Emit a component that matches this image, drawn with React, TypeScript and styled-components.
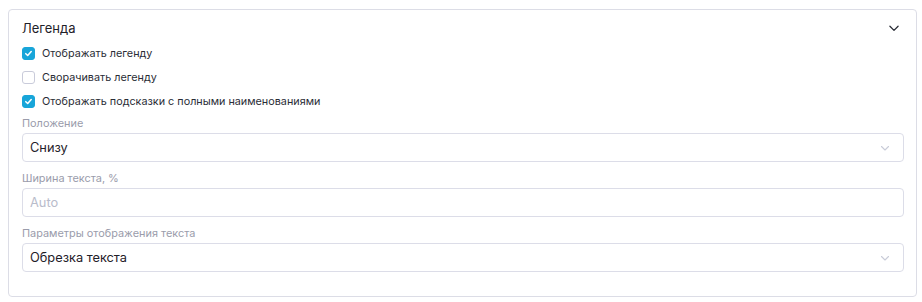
import * as React from "react";
import styled, { createGlobalStyle } from "styled-components";

const GlobalStyle = createGlobalStyle`
  html, body {
    margin: 0;
    padding: 0;
    background: #ffffff;
  }
  body {
    padding: 9px 5px 0 8px;
    font-family: Inter, "Noto Sans", Arial, sans-serif;
    color: #1f2129;
  }
`;

function Chevron({ color, size }: { color: string; size: number }) {
  return (
    <svg width={size} height={size} viewBox="0 0 12 12" fill="none">
      <path
        d="M2.5 4.5 L6 8 L9.5 4.5"
        stroke={color}
        strokeWidth="1.1"
        strokeLinecap="round"
        strokeLinejoin="round"
      />
    </svg>
  );
}

function CheckMark() {
  return (
    <svg width="9" height="9" viewBox="0 0 10 10" fill="none">
      <path
        d="M2 5.2 L4.1 7.2 L8 2.9"
        stroke="#ffffff"
        strokeWidth="1.7"
        strokeLinecap="round"
        strokeLinejoin="round"
      />
    </svg>
  );
}

const options = [
  { label: "Отображать легенду", checked: true },
  { label: "Сворачивать легенду", checked: false },
  { label: "Отображать подсказки с полными наименованиями", checked: true },
];

function App() {
  return (
    <>
      <GlobalStyle />
      <Panel>
        <Header>
          <Title>Легенда</Title>
          <Chevron color="#2a2d36" size={14} />
        </Header>
        <CheckList>
          {options.map((o) => (
            <CheckRow key={o.label}>
              <Box checked={o.checked}>{o.checked && <CheckMark />}</Box>
              <CheckLabel>{o.label}</CheckLabel>
            </CheckRow>
          ))}
        </CheckList>
        <Fields>
          <Field>
            <FieldLabel>Положение</FieldLabel>
            <Control>
              <ControlText>Снизу</ControlText>
              <Chevron color="#c9ccd8" size={12} />
            </Control>
          </Field>
          <Field>
            <FieldLabel>Ширина текста, %</FieldLabel>
            <Control>
              <ControlText placeholder>Auto</ControlText>
            </Control>
          </Field>
          <Field>
            <FieldLabel>Параметры отображения текста</FieldLabel>
            <Control>
              <ControlText>Обрезка текста</ControlText>
              <Chevron color="#c9ccd8" size={12} />
            </Control>
          </Field>
        </Fields>
      </Panel>
    </>
  );
}

export default App;

const Panel = styled.div`
  box-sizing: border-box;
  width: 909px;
  height: 288px;
  border: 1px solid #dcdde6;
  border-radius: 4px;
  padding: 8px 13px 0 13px;
`;

const Header = styled.div`
  display: flex;
  align-items: center;
  justify-content: space-between;
  height: 20px;
  padding-right: 2px;
`;

const Title = styled.span`
  font-size: 13px;
  font-weight: 400;
  color: #1f2129;
`;

const CheckList = styled.div`
  display: flex;
  flex-direction: column;
  gap: 11px;
  margin-top: 9px;
`;

const CheckRow = styled.label`
  display: flex;
  align-items: center;
  gap: 7px;
  height: 13px;
`;

const Box = styled.span<{ checked: boolean }>`
  box-sizing: border-box;
  display: flex;
  align-items: center;
  justify-content: center;
  width: 13px;
  height: 13px;
  border-radius: 3px;
  background: ${({ checked }) => (checked ? "#18a5d9" : "#ffffff")};
  border: 1px solid ${({ checked }) => (checked ? "#18a5d9" : "#c9cbda")};
`;

const CheckLabel = styled.span`
  font-size: 10.8px;
  color: #2a2d36;
`;

const Fields = styled.div`
  display: flex;
  flex-direction: column;
  gap: 9px;
  margin-top: 8px;
`;

const Field = styled.div`
  display: flex;
  flex-direction: column;
`;

const FieldLabel = styled.span`
  font-size: 10.9px;
  color: #9a9cab;
  line-height: 14px;
  margin-bottom: 3px;
`;

const Control = styled.div`
  box-sizing: border-box;
  display: flex;
  align-items: center;
  justify-content: space-between;
  width: 882px;
  height: 29px;
  border: 1px solid #dcdde8;
  border-radius: 4px;
  padding: 0 12px 0 7px;
`;

const ControlText = styled.span<{ placeholder?: boolean }>`
  font-size: 12.8px;
  color: ${({ placeholder }) => (placeholder ? "#b9bccb" : "#1f2129")};
`;
